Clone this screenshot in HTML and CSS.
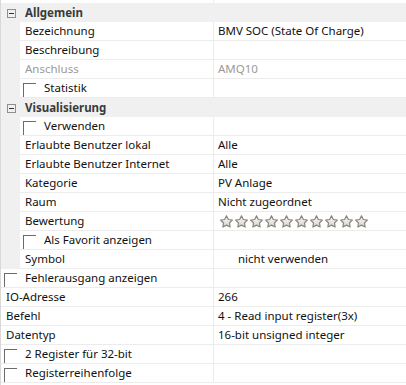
FILE: index.html
```html
<!DOCTYPE html>
<html>
<head>
<meta charset="utf-8">
<link rel="stylesheet" href="styles.css">
</head>
<body>
<div class="grid">
  <div class="row strip"><div class="name"></div><div class="val"></div></div>

  <div class="cat"><svg class="exp" width="9" height="9" viewBox="0 0 9 9"><rect x="0.5" y="0.5" width="8" height="8" fill="none" stroke="#8f8f8f"/><path d="M2 4.5h5" stroke="#333"/></svg><span class="cat-label">Allgemein</span></div>
  <div class="row sub"><div class="gut"></div><div class="name">Bezeichnung</div><div class="val">BMV SOC (State Of Charge)</div></div>
  <div class="row sub"><div class="gut"></div><div class="name">Beschreibung</div><div class="val"></div></div>
  <div class="row sub dim"><div class="gut"></div><div class="name">Anschluss</div><div class="val">AMQ10</div></div>
  <div class="row sub"><div class="gut"></div><div class="name"><span class="chk"></span>Statistik</div><div class="val"></div></div>

  <div class="cat"><svg class="exp" width="9" height="9" viewBox="0 0 9 9"><rect x="0.5" y="0.5" width="8" height="8" fill="none" stroke="#8f8f8f"/><path d="M2 4.5h5" stroke="#333"/></svg><span class="cat-label">Visualisierung</span></div>
  <div class="row sub"><div class="gut"></div><div class="name"><span class="chk"></span>Verwenden</div><div class="val"></div></div>
  <div class="row sub"><div class="gut"></div><div class="name">Erlaubte Benutzer lokal</div><div class="val">Alle</div></div>
  <div class="row sub"><div class="gut"></div><div class="name">Erlaubte Benutzer Internet</div><div class="val">Alle</div></div>
  <div class="row sub"><div class="gut"></div><div class="name">Kategorie</div><div class="val">PV Anlage</div></div>
  <div class="row sub"><div class="gut"></div><div class="name">Raum</div><div class="val">Nicht zugeordnet</div></div>
  <div class="row sub"><div class="gut"></div><div class="name">Bewertung</div><div class="val stars-cell">
    <svg class="stars" width="152" height="18" viewBox="0 0 152 18">
      <defs>
        <linearGradient id="sg" x1="0" y1="0" x2="0" y2="1">
          <stop offset="0" stop-color="#fbfaf7"/>
          <stop offset="1" stop-color="#d8d4ca"/>
        </linearGradient>
        <polygon id="st" points="0,-6.2 1.82,-2.51 5.9,-1.92 2.95,0.96 3.64,5.02 0,3.1 -3.64,5.02 -2.95,0.96 -5.9,-1.92 -1.82,-2.51" fill="url(#sg)" stroke="#8a867e" stroke-width="1.2" stroke-linejoin="round"/>
      </defs>
      <use href="#st" x="8.5" y="10"/>
      <use href="#st" x="23.5" y="10"/>
      <use href="#st" x="38.5" y="10"/>
      <use href="#st" x="53.5" y="10"/>
      <use href="#st" x="68.5" y="10"/>
      <use href="#st" x="83.5" y="10"/>
      <use href="#st" x="98.5" y="10"/>
      <use href="#st" x="113.5" y="10"/>
      <use href="#st" x="128.5" y="10"/>
      <use href="#st" x="143.5" y="10"/>
    </svg>
  </div></div>
  <div class="row sub"><div class="gut"></div><div class="name"><span class="chk"></span>Als Favorit anzeigen</div><div class="val"></div></div>
  <div class="row sub"><div class="gut"></div><div class="name">Symbol</div><div class="val symbol">nicht verwenden</div></div>

  <div class="row top"><div class="name"><span class="chk"></span>Fehlerausgang anzeigen</div><div class="val"></div></div>
  <div class="row top"><div class="name">IO-Adresse</div><div class="val">266</div></div>
  <div class="row top"><div class="name">Befehl</div><div class="val">4 - Read input register(3x)</div></div>
  <div class="row top"><div class="name">Datentyp</div><div class="val">16-bit unsigned integer</div></div>
  <div class="row top"><div class="name"><span class="chk"></span>2 Register für 32-bit</div><div class="val"></div></div>
  <div class="row top"><div class="name"><span class="chk"></span>Registerreihenfolge</div><div class="val"></div></div>
</div>
</body>
</html>
```

FILE: styles.css
```css
html, body {
  margin: 0;
  padding: 0;
  background: #ffffff;
}

body {
  font-family: "Noto Sans", "Open Sans", sans-serif;
  font-size: 11.5px;
  color: #111111;
}

.grid {
  width: 406px;
  height: 385px;
  overflow: hidden;
  border-left: 1px solid #d9d9d9;
  box-sizing: border-box;
  display: flex;
  flex-direction: column;
}

.row {
  display: grid;
  height: 19px;
  flex: none;
}

.row.top,
.row.strip {
  grid-template-columns: 213px 1fr;
}

.row.sub {
  grid-template-columns: 19px 194px 1fr;
}

.row.strip {
  height: 3px;
}

.gut {
  background: #f0f0f0;
}

.name,
.val {
  box-sizing: border-box;
  border-bottom: 1px solid #ececec;
  line-height: 18px;
  white-space: nowrap;
  overflow: hidden;
  display: flex;
  align-items: center;
}

.name {
  border-right: 1px solid #ececec;
  padding-left: 5px;
}

.val {
  padding-left: 4px;
}

.strip .name,
.strip .val {
  border-bottom: none;
}

.dim .name,
.dim .val {
  color: #9a9a9a;
}

.cat {
  height: 19px;
  flex: none;
  background: #f0f0f0;
  display: flex;
  align-items: flex-start;
}

.exp {
  display: block;
  margin: 6px 0 0 6px;
  flex: none;
}

.cat-label {
  margin-left: 9px;
  font-weight: bold;
  line-height: 19px;
  color: #3a3a3a;
}

.chk {
  display: block;
  flex: none;
  width: 13px;
  height: 14px;
  margin-left: -2px;
  margin-right: 8px;
  align-self: flex-start;
  margin-top: 4px;
  box-sizing: border-box;
  border-top: 1px solid #6b6b6b;
  border-left: 1px solid #6b6b6b;
}

.stars-cell {
  padding-left: 0;
}

.stars {
  display: block;
  align-self: flex-start;
  margin-left: 4px;
}

.symbol {
  padding-left: 24px;
}
```
